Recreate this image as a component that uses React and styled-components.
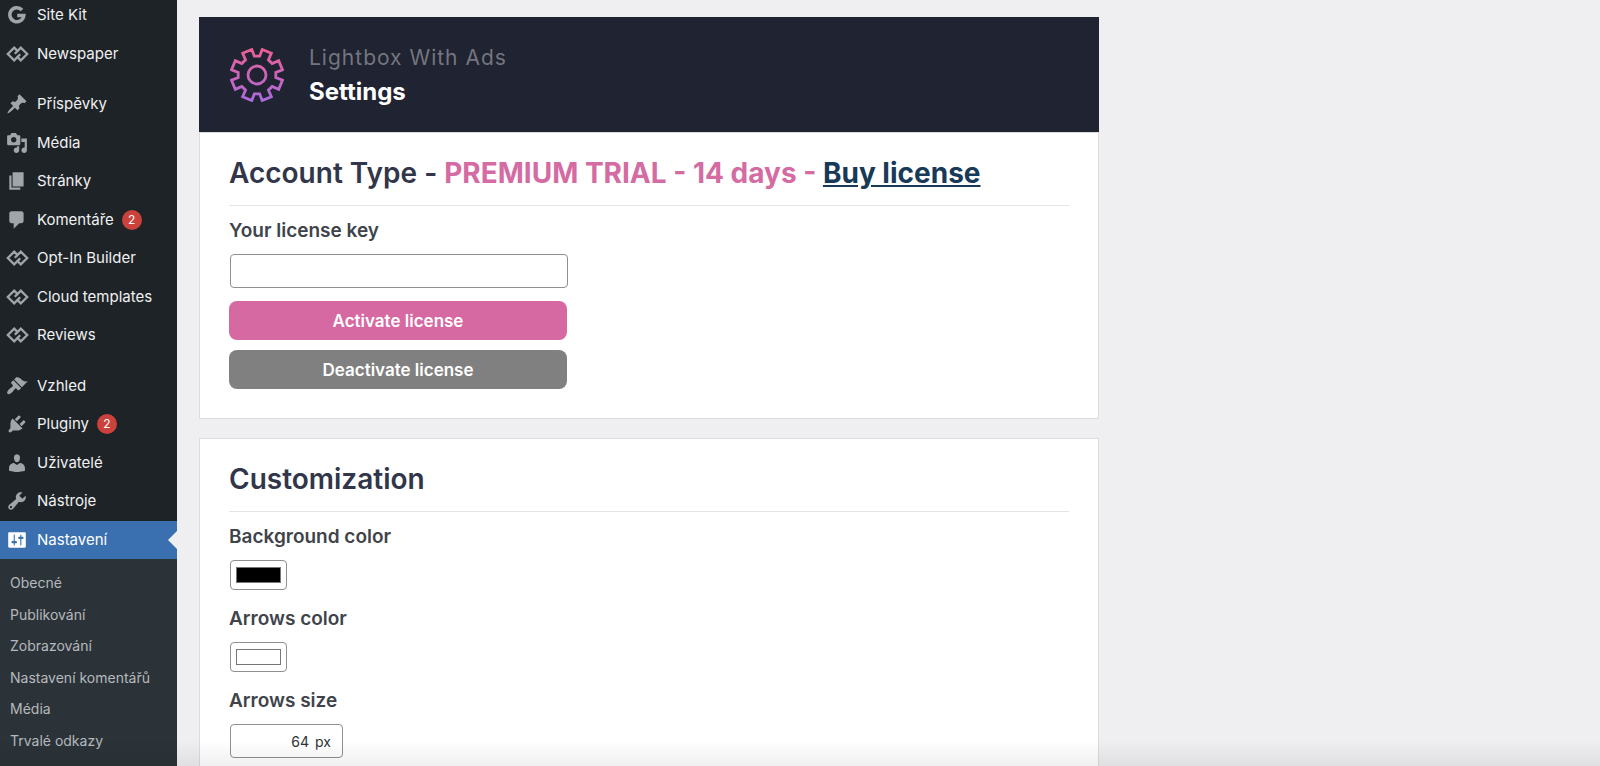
import React from 'react';
import styled, { createGlobalStyle } from 'styled-components';

const Global = createGlobalStyle`
  *, *::before, *::after { box-sizing: border-box; }
  body { margin: 0; background: #efeff1; font-family: Inter, "Liberation Sans", sans-serif; color: #3c434a; }
  ul { list-style: none; margin: 0; padding: 0; }
  h1, h2, p { margin: 0; }
`;

const Shell = styled.div`
  display: flex;
  height: 100vh;
  overflow: hidden;
`;

const Sidebar = styled.nav`
  flex: none;
  width: 177px;
  background: #1d2327;
`;

const MenuGroup = styled.ul`
  margin-bottom: 12px;
  &:first-child { margin-top: -4px; }
`;

const MenuLink = styled.a`
  position: relative;
  display: flex;
  align-items: center;
  gap: 9px;
  padding: 8px 0 8px 6px;
  font-size: 15px;
  line-height: 1.5;
  color: ${(p) => (p.$active ? '#fff' : '#f0f0f1')};
  background: ${(p) => (p.$active ? '#3a6fb0' : 'transparent')};
  text-decoration: none;
  white-space: nowrap;
  svg {
    flex: none;
    width: 22px;
    height: 22px;
    color: ${(p) => (p.$active ? '#fff' : '#a0a5aa')};
  }
  &::after {
    content: ${(p) => (p.$active ? '""' : 'none')};
    position: absolute;
    right: 0;
    top: 50%;
    margin-top: -9px;
    border: 9px solid transparent;
    border-left-width: 0;
    border-right-color: #efeff1;
  }
`;

const Count = styled.span`
  display: inline-block;
  width: 20px;
  height: 20px;
  margin-left: -1px;
  border-radius: 10px;
  background: #cb423d;
  color: #fff;
  font-size: 12px;
  line-height: 20px;
  text-align: center;
`;

const Submenu = styled.ul`
  padding: 8px 0 40px;
  background: #2c3338;
`;

const SubLink = styled.a`
  display: block;
  padding: 6px 10px;
  font-size: 14px;
  line-height: 1.4;
  color: #b5b9bd;
  text-decoration: none;
  white-space: nowrap;
`;

const Main = styled.main`
  flex: 1;
  min-width: 0;
  padding: 17px 22px 0;
`;

const Banner = styled.header`
  display: flex;
  align-items: center;
  gap: 25px;
  max-width: 900px;
  height: 115px;
  padding: 0 31px;
  background: #202331;
`;

const Brand = styled.p`
  font-size: 21px;
  line-height: 34px;
  letter-spacing: 1px;
  color: #74767f;
`;

const PageTitle = styled.h1`
  font-size: 24px;
  line-height: 34px;
  font-weight: 700;
  color: #fff;
`;

const Card = styled.section`
  max-width: 900px;
  margin-bottom: 19px;
  padding: 20px 29px 29px;
  background: #fff;
  border: 1px solid #dcdcde;
`;

const Heading = styled.h2`
  padding-bottom: 12px;
  margin-bottom: 11px;
  border-bottom: 1px solid #e2e4e7;
  font-size: 28px;
  line-height: 40px;
  font-weight: 600;
  color: #32364a;
`;

const Status = styled.span`
  font-weight: 700;
  color: #d46ba3;
`;

const BuyLink = styled.a`
  font-weight: 700;
  color: #173a58;
`;

const Fields = styled.div`
  display: flex;
  flex-direction: column;
  gap: 15px;
`;

const Label = styled.label`
  display: block;
  margin-bottom: 9px;
  font-size: 19px;
  line-height: 28px;
  font-weight: 600;
  color: #3f444b;
`;

const TextInput = styled.input`
  display: block;
  width: 338px;
  max-width: 100%;
  height: 34px;
  margin-left: 1px;
  padding: 0 9px;
  border: 1px solid #8c8f94;
  border-radius: 4px;
  background: #fff;
  font: inherit;
  font-size: 15px;
`;

const ColorInput = styled.input`
  display: block;
  width: 57px;
  height: 30px;
  margin-left: 1px;
  padding: 2px 3px;
  border: 1px solid #8c8f94;
  border-radius: 4px;
  background: #fff;
  &::-webkit-color-swatch-wrapper { padding: 4px 2px; }
  &::-webkit-color-swatch { border: 1px solid #777; }
`;

const UnitBox = styled.span`
  display: flex;
  align-items: center;
  width: 113px;
  height: 34px;
  margin-left: 1px;
  padding-right: 11px;
  border: 1px solid #8c8f94;
  border-radius: 4px;
  font-size: 14px;
  color: #2c3338;
`;

const NumberInput = styled.input`
  flex: 1;
  min-width: 0;
  padding: 0 6px 0 0;
  border: 0;
  background: none;
  font: inherit;
  color: inherit;
  text-align: right;
`;

const Actions = styled.div`
  display: flex;
  flex-direction: column;
  gap: 10px;
  margin-top: 13px;
`;

const Button = styled.button`
  width: 338px;
  max-width: 100%;
  height: 39px;
  border: 0;
  border-radius: 8px;
  background: ${(p) => (p.$muted ? '#808080' : '#d668a2')};
  color: #fff;
  font: 600 17px Inter, sans-serif;
`;

const BottomShade = styled.div`
  position: fixed;
  left: 0;
  right: 0;
  bottom: 0;
  height: 26px;
  background: linear-gradient(transparent, rgba(0, 0, 0, 0.06));
  pointer-events: none;
`;

const glyphs = {
  post: 'M10.44 3.02l1.82-1.82 6.36 6.35-1.83 1.82c-1.05-.68-2.48-.57-3.41.36l-.75.75c-.92.93-1.04 2.35-.35 3.41l-1.83 1.82-2.41-2.41-2.8 2.79c-.42.42-3.38 2.71-3.8 2.29s1.86-3.39 2.28-3.81l2.79-2.79L4.1 9.36l1.83-1.82c1.05.69 2.48.57 3.4-.36l.75-.75c.93-.92 1.05-2.35.36-3.41z',
  media: 'M13 11V4c0-.55-.45-1-1-1h-1.67L9 1H5L3.67 3H2c-.55 0-1 .45-1 1v7c0 .55.45 1 1 1h10c.55 0 1-.45 1-1zM7 4.5c1.38 0 2.5 1.12 2.5 2.5S8.38 9.5 7 9.5 4.5 8.38 4.5 7 5.62 4.5 7 4.5zM14 6h5v10.5c0 1.38-1.12 2.5-2.5 2.5S14 17.88 14 16.5s1.12-2.5 2.5-2.5c.17 0 .34.02.5.05V9h-3V6zm-4 8.05V13h2v3.5c0 1.38-1.12 2.5-2.5 2.5S7 17.88 7 16.5 8.12 14 9.5 14c.17 0 .34.02.5.05z',
  page: 'M6 15V2h10v13H6zm-1 1h8v2H3V5h2v11z',
  comments: 'M5 2h9c1.1 0 2 .9 2 2v7c0 1.1-.9 2-2 2h-2l-5 5v-5H5c-1.1 0-2-.9-2-2V4c0-1.1.9-2 2-2z',
  appearance: 'M14.48 11.06L7.41 3.99l1.5-1.5c.5-.56 2.3-.47 3.51.32 1.21.8 1.43 1.28 2.91 2.1 1.18.64 2.45 1.26 4.45.85zm-.71.71L6.7 4.7 4.93 6.47c-.39.39-.39 1.02 0 1.41l1.06 1.06c.39.39.39 1.03 0 1.42-.6.6-1.43 1.11-2.21 1.69-.35.26-.7.53-1.01.84C1.43 14.23.4 16.08 1.4 17.07c.99 1 2.84-.03 4.18-1.36.31-.31.58-.66.85-1.02.57-.78 1.08-1.61 1.69-2.21.39-.39 1.02-.39 1.41 0l1.06 1.06c.39.39 1.02.39 1.41 0z',
  plugins: 'M13.11 4.36L9.87 7.6 8 5.73l3.24-3.24c.35-.34 1.05-.2 1.56.32.52.51.66 1.21.31 1.55zm-8 1.77l.91-1.12 9.01 9.01-1.19.84c-.71.71-2.63 1.16-3.82 1.16H6.14L4.9 17.26c-.59.59-1.54.59-2.12 0-.59-.58-.59-1.53 0-2.12l1.24-1.24v-3.88c0-1.13.4-3.19 1.09-3.89zm7.26 3.97l3.24-3.24c.34-.35 1.04-.21 1.55.31.52.51.66 1.21.31 1.55l-3.24 3.25z',
  users: 'M10 9.25c-2.27 0-2.73-3.44-2.73-3.44C7 4.02 7.82 2 9.97 2c2.16 0 2.98 2.02 2.71 3.81 0 0-.41 3.44-2.68 3.44zm0 2.57L12.72 10c2.39 0 4.52 2.33 4.52 4.53v2.49s-3.65 1.13-7.24 1.13c-3.65 0-7.24-1.13-7.24-1.13v-2.49c0-2.25 1.94-4.48 4.47-4.48z',
  tools: 'M16.68 9.77c-1.34 1.34-3.3 1.67-4.95.99l-5.41 6.52c-.99.99-2.59.99-3.58 0s-.99-2.59 0-3.57l6.52-5.42c-.68-1.65-.35-3.61.99-4.95 1.28-1.28 3.12-1.62 4.72-1.06l-2.89 2.89 2.82 2.82 2.86-2.87c.53 1.58.18 3.39-1.08 4.65zM3.81 16.21c.4.39 1.04.39 1.43 0 .4-.4.4-1.04 0-1.43-.39-.4-1.03-.4-1.43 0-.39.39-.39 1.03 0 1.43z',
  settings: 'M18 16V4c0-.55-.45-1-1-1H3c-.55 0-1 .45-1 1v12c0 .55.45 1 1 1h14c.55 0 1-.45 1-1zM8 11h1c.55 0 1 .45 1 1s-.45 1-1 1H8v1.5c0 .28-.22.5-.5.5s-.5-.22-.5-.5V13H6c-.55 0-1-.45-1-1s.45-1 1-1h1V5.5c0-.28.22-.5.5-.5s.5.22.5.5V11zm5-2h-1c-.55 0-1-.45-1-1s.45-1 1-1h1V5.5c0-.28.22-.5.5-.5s.5.22.5.5V7h1c.55 0 1 .45 1 1s-.45 1-1 1h-1v5.5c0 .28-.22.5-.5.5s-.5-.22-.5-.5V9z',
};

function MenuIcon({ name }) {
  if (name === 'sitekit') {
    return (
      <svg viewBox="0 0 22 22" aria-hidden="true" fill="none" stroke="currentColor" strokeWidth="3.5">
        <path d="M16 6A7 7 0 1 0 17.8 11.6H11.2" />
      </svg>
    );
  }
  if (name === 'tagdiv') {
    return (
      <svg viewBox="0 0 22 22" aria-hidden="true" fill="none" stroke="currentColor" strokeWidth="2.3" overflow="visible">
        <path d="M12.2 8.6L8.2 4.7L1.8 11L8.2 17.3L14.2 11.3" />
        <path d="M10.8 13.4L14.8 17.3L21.2 11L14.8 4.7L8.8 10.7" />
      </svg>
    );
  }
  return (
    <svg viewBox="0 0 20 20" aria-hidden="true" fill="currentColor">
      <path d={glyphs[name]} />
    </svg>
  );
}

// Outline of a cog with eight teeth, centred in a 54px square.
function gearOutline() {
  const pts = [];
  for (let i = 0; i < 8; i += 1) {
    const c = 22.5 + i * 45;
    [[-14.5, 19], [-11, 26], [11, 26], [14.5, 19]].forEach(([d, r]) => {
      const a = ((c + d - 90) * Math.PI) / 180;
      pts.push((27 + r * Math.cos(a)).toFixed(2) + ',' + (27 + r * Math.sin(a)).toFixed(2));
    });
  }
  return pts.join(' ');
}

function Gear() {
  return (
    <svg width="54" height="54" viewBox="0 0 54 54" fill="none" stroke="url(#gear)" strokeWidth="2.8" aria-hidden="true">
      <defs>
        <linearGradient id="gear" gradientUnits="userSpaceOnUse" x1="0" y1="0" x2="0" y2="54">
          <stop offset="0" stopColor="#ec5f93" />
          <stop offset="1" stopColor="#ab6be0" />
        </linearGradient>
      </defs>
      <polygon points={gearOutline()} />
      <circle cx="27" cy="27" r="9" />
    </svg>
  );
}

const groups = [
  [['sitekit', 'Site Kit'], ['tagdiv', 'Newspaper']],
  [
    ['post', 'Příspěvky'],
    ['media', 'Média'],
    ['page', 'Stránky'],
    ['comments', 'Komentáře', 2],
    ['tagdiv', 'Opt-In Builder'],
    ['tagdiv', 'Cloud templates'],
    ['tagdiv', 'Reviews'],
  ],
  [
    ['appearance', 'Vzhled'],
    ['plugins', 'Pluginy', 2],
    ['users', 'Uživatelé'],
    ['tools', 'Nástroje'],
    ['settings', 'Nastavení'],
  ],
];

const submenu = ['Obecné', 'Publikování', 'Zobrazování', 'Nastavení komentářů', 'Média', 'Trvalé odkazy'];

export default function App() {
  return (
    <Shell>
      <Global />
      <Sidebar>
        {groups.map((items) => (
          <MenuGroup key={items[0][1]}>
            {items.map(([icon, text, count]) => {
              const active = icon === 'settings';
              return (
                <li key={text}>
                  <MenuLink href="#" $active={active}>
                    <MenuIcon name={icon} />
                    {text}
                    {count && <Count>{count}</Count>}
                  </MenuLink>
                  {active && (
                    <Submenu>
                      {submenu.map((s) => (
                        <li key={s}><SubLink href="#">{s}</SubLink></li>
                      ))}
                    </Submenu>
                  )}
                </li>
              );
            })}
          </MenuGroup>
        ))}
      </Sidebar>
      <Main>
        <Banner>
          <Gear />
          <div>
            <Brand>Lightbox With Ads</Brand>
            <PageTitle>Settings</PageTitle>
          </div>
        </Banner>
        <Card>
          <Heading>
            Account Type - <Status>PREMIUM TRIAL - 14 days - </Status>
            <BuyLink href="#">Buy license</BuyLink>
          </Heading>
          <Label htmlFor="license">Your license key</Label>
          <TextInput id="license" type="text" />
          <Actions>
            <Button type="button">Activate license</Button>
            <Button type="button" $muted>Deactivate license</Button>
          </Actions>
        </Card>
        <Card>
          <Heading>Customization</Heading>
          <Fields>
            <div>
              <Label htmlFor="bg">Background color</Label>
              <ColorInput id="bg" type="color" defaultValue="#000000" />
            </div>
            <div>
              <Label htmlFor="arrows">Arrows color</Label>
              <ColorInput id="arrows" type="color" defaultValue="#ffffff" />
            </div>
            <div>
              <Label htmlFor="size">Arrows size</Label>
              <UnitBox>
                <NumberInput id="size" type="text" inputMode="numeric" defaultValue="64" />
                px
              </UnitBox>
            </div>
          </Fields>
        </Card>
      </Main>
      <BottomShade />
    </Shell>
  );
}
